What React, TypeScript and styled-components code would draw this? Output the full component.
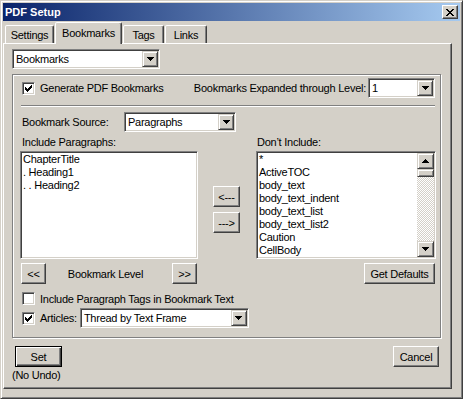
import React from 'react';
import styled, { createGlobalStyle } from 'styled-components';

const FACE = '#D4D0C8';

const Global = createGlobalStyle`
  html, body { margin: 0; padding: 0; background: #ffffff; }
  body {
    font-family: "Liberation Sans", Arial, sans-serif;
    font-size: 11px;
    letter-spacing: -0.25px;
    color: #000;
  }
  * { box-sizing: border-box; }
`;

const Window = styled.div`
  width: 463px;
  height: 399px;
  background: ${FACE};
  border: 1px solid;
  border-color: ${FACE} #404040 #404040 ${FACE};
  box-shadow: inset 1px 1px #ffffff, inset -1px -1px #808080;
  padding: 2px;
  display: flex;
  flex-direction: column;
`;

const TitleBar = styled.div`
  height: 18px;
  display: flex;
  align-items: center;
  padding-left: 2px;
  background: linear-gradient(to right, #0a246a, #a6caf0);
`;

const TitleText = styled.span`
  color: #fff;
  font-weight: bold;
  font-size: 11px;
  letter-spacing: 0;
`;

const CloseButton = styled.div`
  margin-left: auto;
  margin-right: 2px;
  width: 16px;
  height: 14px;
  background: ${FACE};
  border: 1px solid;
  border-color: #ffffff #404040 #404040 #ffffff;
  box-shadow: inset -1px -1px #808080;
  display: flex;
  align-items: center;
  justify-content: center;
`;

const TabStrip = styled.div`
  height: 22px;
  display: flex;
  align-items: flex-end;
  padding-left: 2px;
`;

const Tab = styled.div<{ $active?: boolean; $width: number }>`
  width: ${(p) => p.$width}px;
  height: ${(p) => (p.$active ? 22 : 18)}px;
  margin-bottom: ${(p) => (p.$active ? -1 : 0)}px;
  margin-right: 1px;
  padding-bottom: ${(p) => (p.$active ? 2 : 0)}px;
  position: relative;
  z-index: ${(p) => (p.$active ? 2 : 1)};
  background: ${FACE};
  border: 1px solid;
  border-bottom: none;
  border-color: #ffffff #404040 transparent #ffffff;
  border-radius: 2px 2px 0 0;
  box-shadow: inset -1px 0 #808080;
  display: flex;
  align-items: center;
  justify-content: center;
  white-space: nowrap;
`;

const Panel = styled.div`
  height: 346px;
  width: 449px;
  border: 1px solid;
  border-color: #ffffff #404040 #404040 #ffffff;
  box-shadow: inset -1px -1px #808080;
  padding: 5px 12px 0 8px;
  display: flex;
  flex-direction: column;
  align-items: flex-start;
`;

const Sunken = styled.div`
  background: #ffffff;
  border: 1px solid;
  border-color: #808080 #ffffff #ffffff #808080;
  box-shadow: inset 1px 1px #404040, inset -1px -1px ${FACE};
  padding: 1px;
`;

const ComboBox = styled(Sunken)<{ $width: number }>`
  width: ${(p) => p.$width}px;
  height: 20px;
  flex: none;
  display: flex;
  align-items: center;
`;

const ComboText = styled.span`
  padding-left: 2px;
  white-space: nowrap;
  overflow: hidden;
  flex: 1;
`;

const SmallButton = styled.div`
  width: 16px;
  height: 16px;
  flex: none;
  background: ${FACE};
  border: 1px solid;
  border-color: ${FACE} #404040 #404040 ${FACE};
  box-shadow: inset 1px 1px #ffffff, inset -1px -1px #808080;
  display: flex;
  align-items: center;
  justify-content: center;
`;

const ScrollButton = styled(SmallButton)`
  width: 100%;
`;

const GroupBox = styled.div`
  margin-top: 5px;
  width: 429px;
  height: 264px;
  flex: none;
  border: 1px solid #808080;
  box-shadow: inset 1px 1px #ffffff, 1px 1px #ffffff;
  padding: 3px 5px 0 8px;
  display: flex;
  flex-direction: column;
  align-items: stretch;
`;

const Row = styled.div<{ $mt?: number; $h?: number }>`
  display: flex;
  align-items: center;
  margin-top: ${(p) => p.$mt ?? 0}px;
  height: ${(p) => p.$h ?? 20}px;
  flex: none;
  white-space: nowrap;
`;

const CheckLabel = styled.label`
  display: flex;
  align-items: center;
  margin-left: 1px;
  gap: 5px;
  white-space: nowrap;
`;

const CheckBoxBox = styled(Sunken)`
  width: 13px;
  height: 13px;
  flex: none;
  padding: 0;
  position: relative;
  display: flex;
  align-items: center;
  justify-content: center;
`;

const Separator = styled.div`
  margin-top: 7px;
  height: 2px;
  flex: none;
  border-top: 1px solid #808080;
  border-bottom: 1px solid #ffffff;
`;

const FieldLabel = styled.span<{ $width?: number }>`
  width: ${(p) => (p.$width ? `${p.$width}px` : 'auto')};
  padding-left: 1px;
  flex: none;
  white-space: nowrap;
`;

const RightLabel = styled.span`
  margin-left: auto;
  margin-right: 2px;
`;

const LabelRow = styled.div`
  display: flex;
  margin-top: 4px;
  height: 13px;
  line-height: 13px;
  flex: none;
`;

const ListRow = styled.div`
  display: flex;
  align-items: flex-start;
  margin: 2px -1px 0 -1px;
  flex: none;
`;

const ListBox = styled(Sunken)<{ $width: number }>`
  width: ${(p) => p.$width}px;
  height: 108px;
  flex: none;
  display: flex;
  overflow: hidden;
`;

const ListItems = styled.div`
  flex: 1;
  display: flex;
  flex-direction: column;
  padding-left: 1px;
`;

const ListItem = styled.div`
  height: 13px;
  line-height: 13px;
  white-space: nowrap;
`;

const ScrollBar = styled.div`
  width: 17px;
  flex: none;
  display: flex;
  flex-direction: column;
  background-color: #ffffff;
  background-image: repeating-conic-gradient(${FACE} 0% 25%, #ffffff 0% 50%);
  background-size: 2px 2px;
`;

const ScrollThumb = styled.div`
  height: 8px;
  flex: none;
  background: ${FACE};
  border: 1px solid;
  border-color: ${FACE} #404040 #404040 ${FACE};
  box-shadow: inset 1px 1px #ffffff, inset -1px -1px #808080;
`;

const ScrollTrack = styled.div`
  flex: 1;
`;

const ArrowColumn = styled.div`
  width: 27px;
  margin: 0 16px 0 15px;
  padding-top: 35px;
  display: flex;
  flex-direction: column;
  gap: 5px;
  flex: none;
`;

const PushButton = styled.div<{ $width: number; $default?: boolean }>`
  width: ${(p) => p.$width}px;
  height: 21px;
  flex: none;
  background: ${FACE};
  border: 1px solid;
  border-color: ${(p) =>
    p.$default ? '#000000' : `#ffffff #404040 #404040 #ffffff`};
  box-shadow: ${(p) =>
    p.$default
      ? 'inset 1px 1px #ffffff, inset -1px -1px #404040, inset -2px -2px #808080'
      : 'inset -1px -1px #808080'};
  display: flex;
  align-items: center;
  justify-content: center;
  white-space: nowrap;
`;

const LevelGroup = styled.div`
  width: 176px;
  display: flex;
  align-items: center;
`;

const LevelText = styled.span`
  flex: 1;
  text-align: center;
  padding-right: 7px;
`;

const GetDefaults = styled(PushButton)`
  margin-left: auto;
`;

const BottomRow = styled.div`
  margin-top: 8px;
  align-self: stretch;
  display: flex;
  justify-content: space-between;
  align-items: flex-start;
`;

const SetColumn = styled.div`
  display: flex;
  flex-direction: column;
  align-items: flex-start;
`;

const SetButton = styled(PushButton)`
  margin-left: 3px;
`;

const NoUndo = styled.span`
  margin-top: 2px;
  line-height: 13px;
`;

const Pixels = ({ rows, w, h }: { rows: [number, number, number][]; w: number; h: number }) => (
  <svg width={w} height={h} viewBox={`0 0 ${w} ${h}`} shapeRendering="crispEdges">
    {rows.map(([y, x1, x2], i) => (
      <rect key={i} x={x1} y={y} width={x2 - x1} height={1} fill="#000" />
    ))}
  </svg>
);

const DownArrow = () => (
  <Pixels w={7} h={4} rows={[[0, 0, 7], [1, 1, 6], [2, 2, 5], [3, 3, 4]]} />
);
const UpArrow = () => (
  <Pixels w={7} h={4} rows={[[3, 0, 7], [2, 1, 6], [1, 2, 5], [0, 3, 4]]} />
);
const CloseGlyph = () => (
  <Pixels
    w={8}
    h={7}
    rows={[
      [0, 0, 2], [0, 6, 8],
      [1, 1, 3], [1, 5, 7],
      [2, 2, 6],
      [3, 3, 5],
      [4, 2, 6],
      [5, 1, 3], [5, 5, 7],
      [6, 0, 2], [6, 6, 8],
    ]}
  />
);
const CheckGlyph = () => (
  <Pixels
    w={7}
    h={7}
    rows={[
      [0, 6, 7],
      [1, 5, 7],
      [2, 0, 1], [2, 4, 7],
      [3, 0, 2], [3, 3, 6],
      [4, 0, 5],
      [5, 1, 4],
      [6, 2, 3],
    ]}
  />
);

const Combo = ({ width, value }: { width: number; value: string }) => (
  <ComboBox $width={width}>
    <ComboText>{value}</ComboText>
    <SmallButton>
      <DownArrow />
    </SmallButton>
  </ComboBox>
);

const Check = ({ checked, label }: { checked?: boolean; label: string }) => (
  <CheckLabel>
    <CheckBoxBox>{checked && <CheckGlyph />}</CheckBoxBox>
    <span>{label}</span>
  </CheckLabel>
);

const included = ['ChapterTitle', '. Heading1', '. . Heading2'];
const excluded = [
  '*',
  'ActiveTOC',
  'body_text',
  'body_text_indent',
  'body_text_list',
  'body_text_list2',
  'Caution',
  'CellBody',
];

const tabs = [
  { label: 'Settings', width: 49 },
  { label: 'Bookmarks', width: 67, active: true },
  { label: 'Tags', width: 41 },
  { label: 'Links', width: 42 },
];

export default function App() {
  return (
    <>
      <Global />
      <Window>
        <TitleBar>
          <TitleText>PDF Setup</TitleText>
          <CloseButton>
            <CloseGlyph />
          </CloseButton>
        </TitleBar>
        <TabStrip>
          {tabs.map((t) => (
            <Tab key={t.label} $width={t.width} $active={t.active}>
              {t.label}
            </Tab>
          ))}
        </TabStrip>
        <Panel>
          <Combo width={148} value="Bookmarks" />
          <GroupBox>
            <Row>
              <Check checked label="Generate PDF Bookmarks" />
              <RightLabel>Bookmarks Expanded through Level:</RightLabel>
              <Combo width={67} value="1" />
            </Row>
            <Separator />
            <Row $mt={5}>
              <FieldLabel $width={103}>Bookmark Source:</FieldLabel>
              <Combo width={112} value="Paragraphs" />
            </Row>
            <LabelRow>
              <FieldLabel $width={235}>Include Paragraphs:</FieldLabel>
              <FieldLabel>Don’t Include:</FieldLabel>
            </LabelRow>
            <ListRow>
              <ListBox $width={178}>
                <ListItems>
                  {included.map((i) => (
                    <ListItem key={i}>{i}</ListItem>
                  ))}
                </ListItems>
              </ListBox>
              <ArrowColumn>
                <PushButton $width={27}>&lt;---</PushButton>
                <PushButton $width={27}>---&gt;</PushButton>
              </ArrowColumn>
              <ListBox $width={180}>
                <ListItems>
                  {excluded.map((i) => (
                    <ListItem key={i}>{i}</ListItem>
                  ))}
                </ListItems>
                <ScrollBar>
                  <ScrollButton>
                    <UpArrow />
                  </ScrollButton>
                  <ScrollThumb />
                  <ScrollTrack />
                  <ScrollButton>
                    <DownArrow />
                  </ScrollButton>
                </ScrollBar>
              </ListBox>
            </ListRow>
            <Row $mt={4} $h={21}>
              <LevelGroup>
                <PushButton $width={25}>&lt;&lt;</PushButton>
                <LevelText>Bookmark Level</LevelText>
                <PushButton $width={25}>&gt;&gt;</PushButton>
              </LevelGroup>
              <GetDefaults $width={71}>Get Defaults</GetDefaults>
            </Row>
            <Row $mt={8} $h={13}>
              <Check label="Include Paragraph Tags in Bookmark Text" />
            </Row>
            <Row $mt={3}>
              <Check checked label="Articles:" />
              <ComboWrap>
                <Combo width={169} value="Thread by Text Frame" />
              </ComboWrap>
            </Row>
          </GroupBox>
          <BottomRow>
            <SetColumn>
              <SetButton $width={47} $default>
                Set
              </SetButton>
              <NoUndo>(No Undo)</NoUndo>
            </SetColumn>
            <PushButton $width={46}>Cancel</PushButton>
          </BottomRow>
        </Panel>
      </Window>
    </>
  );
}

const ComboWrap = styled.div`
  margin-left: 3px;
  display: flex;
`;
